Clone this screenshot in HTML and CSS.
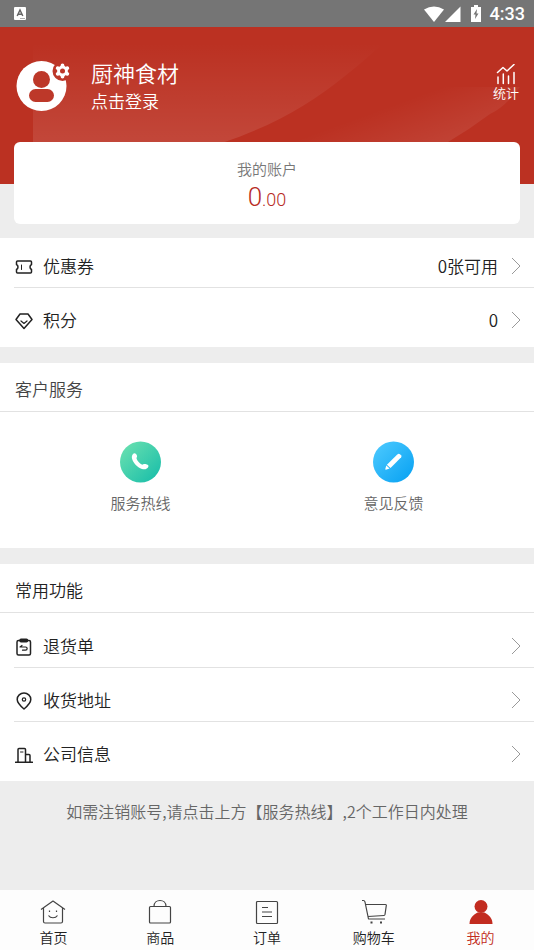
FILE: index.html
```html
<!DOCTYPE html>
<html lang="zh-CN">
<head>
<meta charset="utf-8">
<meta name="viewport" content="width=device-width, initial-scale=1">
<title>我的</title>
<link rel="stylesheet" href="styles.css">
</head>
<body>
<div class="status">
  <svg class="status-app" width="12" height="13" viewBox="0 0 12 13"><rect width="12" height="13" rx="1" fill="#fff"/><path d="M3.2 9 6 3l2.8 6M4.3 7.2h3.4" fill="none" stroke="#666" stroke-width="1.5"/><path d="M6 11.5h5" stroke="#999" stroke-width=".8"/></svg>
  <svg width="20" height="16" viewBox="0 0 20 16" fill="#fff"><path d="M0 3.5Q10-2.500 20 3.500L10 16z"/></svg>
  <svg class="signal" width="16" height="16" viewBox="0 0 16 16" fill="#fff"><path d="M15.500.500v15.500H0z"/></svg>
  <svg class="battery" width="12" height="17" viewBox="0 0 12 17"><path d="M4 0h4v2h3v15H1V2h3z" fill="#fff"/><path d="M7 4 3.500 9.500h2L5 14l3.500-5.500h-2z" fill="#757575"/></svg>
  <span class="clock">4:33</span>
</div>
<main class="page">
  <header class="hero">
    <svg class="hero-art" viewBox="0 0 534 157" preserveAspectRatio="none" aria-hidden="true">
      <defs>
        <linearGradient id="sheen" x1="0" y1="0" x2="0" y2="1"><stop offset=".1" stop-color="#fff" stop-opacity="0"/><stop offset=".75" stop-color="#fff" stop-opacity=".11"/></linearGradient>
        <linearGradient id="sheen2" gradientUnits="userSpaceOnUse" x1="400" y1="75" x2="420" y2="130"><stop offset="0" stop-color="#fff" stop-opacity="0"/><stop offset="1" stop-color="#fff" stop-opacity=".09"/></linearGradient>
      </defs>
      <path d="M33 0H400Q372 28 345 49C312 76 275 98 222 116L140 157H33z" fill="url(#sheen)"/>
      <path d="M222 116Q275 98 312 74L380 60H520Q505 80 490 87Q470 102 448 115L390 157H200z" fill="url(#sheen2)"/>
    </svg>
    <a class="profile" href="#login">
      <svg width="56" height="52" viewBox="0 0 56 52" aria-hidden="true">
        <defs><mask id="cut"><rect width="56" height="52" fill="#fff"/><circle cx="46.500" cy="11" r="10" fill="#000"/></mask></defs>
        <circle cx="25.500" cy="26" r="25" fill="#fff" mask="url(#cut)"/>
        <circle cx="25.500" cy="19.500" r="8.500" fill="#bd3829"/>
        <rect x="13" y="29" width="25" height="13" rx="6.500" fill="#bd3829"/>
        <circle cx="46.500" cy="11" r="5.400" fill="#fff"/>
        <path d="M46.500 5.500v11M41.700 8.200l9.600 5.600M51.300 8.200l-9.600 5.600" stroke="#fff" stroke-width="3.800" stroke-linecap="round"/>
        <circle cx="46.500" cy="11" r="2.500" fill="#bd3829"/>
      </svg>
      <span class="who"><span class="name">厨神食材</span><span class="login">点击登录</span></span>
    </a>
    <a class="stats" href="#stats">
      <svg width="20" height="21" viewBox="0 0 20 21" fill="none" stroke="#fff" stroke-width="1.500" stroke-linecap="round" stroke-linejoin="round"><path d="M1.500 8.500 7 3.500l4 3.500 7-6.500M2 13v6.500M7.300 10v9.500M12.500 12v7.500M18 8.500v11"/></svg>
      <span>统计</span>
    </a>
  </header>
  <section class="account">
    <span class="account-label">我的账户</span>
    <span class="balance">0<small>.00</small></span>
  </section>

  <nav class="panel list">
    <a class="row" href="#coupons">
      <svg class="icon" viewBox="0 0 18 18"><path d="M2.500 3h13q1 0 1 1v2.500c-2 1-2 4 0 5V14q0 1-1 1h-13q-1 0-1-1v-2.500c2-1 2-4 0-5V4q0-1 1-1z"/><path d="M6.500 7v4.500" stroke-width="1"/></svg>
      <span class="label">优惠券</span><span class="value">0张可用</span>
      <svg class="chevron" viewBox="0 0 10 18"><path d="m1 1 8 8-8 8"/></svg>
    </a>
    <a class="row" href="#points">
      <svg class="icon" viewBox="0 0 18 18"><path d="M5 2h8l4 5.500L9 16.500 1 7.500z"/><path d="m6 9 3 2.500L12 9" stroke-width="1.200"/></svg>
      <span class="label">积分</span><span class="value">0</span>
      <svg class="chevron" viewBox="0 0 10 18"><path d="m1 1 8 8-8 8"/></svg>
    </a>
  </nav>

  <section class="panel">
    <h2 class="title muted">客户服务</h2>
    <div class="services">
      <a class="service" href="#hotline">
        <svg width="42" height="42" viewBox="0 0 42 42"><defs><linearGradient id="green" x1="0" y1="0" x2="1" y2="1"><stop stop-color="#6fe3b0"/><stop offset="1" stop-color="#14bba9"/></linearGradient></defs><circle cx="20.500" cy="21" r="20.500" fill="url(#green)"/><path d="M13 13c1.500-1.500 3.500-.3 4 1.800.3 1.300-.8 2-.4 3 .8 2.300 3 4.500 5.200 5.800 1 .5 1.700-.8 3-.6 1.900.1 4.200.8 3.600 2.500-.7 2.300-3.600 3.500-6.400 2.500-5-1.700-8.800-6-10-10.500-.4-1.700 0-3.500 1-4.500z" fill="#fff"/></svg>
        <span>服务热线</span>
      </a>
      <a class="service" href="#feedback">
        <svg width="42" height="42" viewBox="0 0 42 42"><defs><linearGradient id="blue" x1="0" y1="0" x2="1" y2="1"><stop stop-color="#4fcbff"/><stop offset="1" stop-color="#05a0f2"/></linearGradient></defs><circle cx="20.500" cy="21" r="20.500" fill="url(#blue)"/><path d="m24 13.800 1-.9q1-.6 2 .3l1 1q.9 1 .2 2L17.500 27l-3.600-3.200z" fill="#fff"/><path d="m13.300 24.600 3.300 3-3.700 1.100q-.8 0-.6-.8z" fill="#fff"/></svg>
        <span>意见反馈</span>
      </a>
    </div>
  </section>

  <section class="panel">
    <h2 class="title">常用功能</h2>
    <nav class="list tall">
      <a class="row" href="#returns">
        <svg class="icon" viewBox="0 0 18 18"><rect x="2" y="2.500" width="13.500" height="14.500" rx="1.500"/><path d="M6 1.300h5.500q1 0 1 1.200t-1 1.200H6q-1 0-1-1.200t1-1.200z"/><path d="M7 7.500 5 9h5.500c2.200 0 2.200 3.200 0 3.200H7.500" stroke-width="1.200"/></svg>
        <span class="label">退货单</span>
        <svg class="chevron" viewBox="0 0 10 18"><path d="m1 1 8 8-8 8"/></svg>
      </a>
      <a class="row" href="#address">
        <svg class="icon" viewBox="0 0 18 18"><path d="M9 17C5.500 14 2.200 11 2.200 7.500a6.800 6.500 0 0 1 13.600 0C15.800 11 12.500 14 9 17z"/><circle cx="9" cy="7.500" r="1.700" stroke-width="1.200"/></svg>
        <span class="label">收货地址</span>
        <svg class="chevron" viewBox="0 0 10 18"><path d="m1 1 8 8-8 8"/></svg>
      </a>
      <a class="row" href="#company">
        <svg class="icon" viewBox="0 0 18 18"><path d="M.5 16.300h17M3 16V3.500q0-1 1-1h5.500q1 0 1 1V16M10.500 8.500H14q1 0 1 1V16"/><path d="M5.500 6H8" stroke-width="1"/></svg>
        <span class="label">公司信息</span>
        <svg class="chevron" viewBox="0 0 10 18"><path d="m1 1 8 8-8 8"/></svg>
      </a>
    </nav>
  </section>
  <p class="note">如需注销账号,请点击上方【服务热线】,2个工作日内处理</p>
</main>

<nav class="tabs">
  <a class="tab" href="#home"><svg viewBox="0 0 26 26"><path d="m1 10.500 12-8.500 12 8.500M3.500 9v13.500q0 1.500 1.500 1.500h16q1.500 0 1.500-1.500V9"/><path d="M8.500 16.500c2 3 7 3 9 0"/><path d="M9.500 11.500v1.500M16.500 11.500v1.500"/></svg><span>首页</span></a>
  <a class="tab" href="#goods"><svg viewBox="0 0 26 26"><rect x="2.500" y="7.500" width="21" height="16.500" rx="1"/><path d="M7 7.500c0-8 12-8 12 0"/></svg><span>商品</span></a>
  <a class="tab" href="#orders"><svg viewBox="0 0 26 26"><rect x="2.500" y="2.500" width="21" height="22" rx="1"/><path d="M8 8.500h6M8 13h10M8 17.500h10"/></svg><span>订单</span></a>
  <a class="tab" href="#cart"><svg viewBox="0 0 26 26"><path d="M1 1.500h1.500q1 0 1.500 1.500L7.500 20H24M4.500 5.500h20q1 0 .8 1L24 15.500q-.2 1-1 1L7 17.500"/><path d="M9.500 23.500h2M19 23.500h2" stroke-width="2"/></svg><span>购物车</span></a>
  <a class="tab active" href="#me"><svg viewBox="0 0 26 26"><circle cx="13" cy="7.500" r="6.500"/><path d="M1.500 25c0-6 3.500-9 8-11.500h7c4.500 2.500 8 5.500 8 11.500z"/></svg><span>我的</span></a>
</nav>
</body>
</html>
```
FILE: styles.css
```css
* { box-sizing: border-box; }

body {
  margin: 0;
  min-height: 100vh;
  display: flex;
  flex-direction: column;
  background: #ededed;
  color: #222;
  font-family: "Noto Sans CJK SC", sans-serif;
  font-size: 17px;
  font-weight: 350;
  line-height: 24px;
}

a { color: inherit; text-decoration: none; }
svg { display: block; flex: none; }

.status {
  display: flex;
  align-items: center;
  height: 27px;
  padding: 0 9px 0 14px;
  background: #757575;
  color: #fff;
}
.status-app { margin-right: auto; }
.signal { margin-left: 1px; }
.battery { margin: 0 8px 0 9px; }
.clock { font-family: Roboto, sans-serif; font-size: 18px; font-weight: 500; }

.page { flex: 1; }

.hero {
  position: relative;
  display: flex;
  justify-content: space-between;
  align-items: flex-start;
  height: 157px;
  padding: 33px 15px 0 16px;
  background: #bb3122;
  color: #fff;
}
.hero-art { position: absolute; inset: 0; width: 100%; height: 100%; }
.profile { position: relative; display: flex; gap: 19px; }
.who { display: flex; flex-direction: column; gap: 5px; }
.name { font-size: 22px; }
.stats {
  position: relative;
  display: flex;
  flex-direction: column;
  align-items: center;
  padding-top: 4px;
  font-size: 13px;
  line-height: 16px;
}

.account {
  position: relative;
  display: flex;
  flex-direction: column;
  align-items: center;
  margin: -42px 14px 14px;
  padding: 15px 0 11px;
  border-radius: 6px;
  background: #fff;
}
.account-label { color: #777; font-size: 15px; }
.balance { color: #b82c25; font-family: Roboto, sans-serif; font-size: 26px; line-height: 32px; }
.balance small { font-size: 18px; line-height: 18px; }

.panel { margin-bottom: 16px; background: #fff; }
.list { display: flex; flex-direction: column; gap: 10px; padding: 6px 0 5px 14px; }
.tall { padding-top: 11px; }
.row {
  display: flex;
  align-items: center;
  height: 44px;
  padding-right: 13px;
  border-bottom: 1px solid #e2e2e2;
}
.row:last-child { border-bottom-color: transparent; }
.icon {
  width: 18px;
  height: 18px;
  margin: 3px 10px 0 1px;
  fill: none;
  stroke: #222;
  stroke-width: 1.5;
  stroke-linecap: round;
  stroke-linejoin: round;
}
.label { flex: 1; }
.chevron { width: 10px; height: 18px; margin-left: 13px; fill: none; stroke: #999; stroke-width: 1; }

.title {
  margin: 0;
  padding: 14px 15px 10px;
  border-bottom: 1px solid #e2e2e2;
  font-size: 17px;
  font-weight: 350;
}
.muted { color: #444; }

.services { display: grid; grid-template-columns: 1fr 1fr; padding: 29px 14px 33px; }
.service {
  display: flex;
  flex-direction: column;
  align-items: center;
  gap: 8px;
  color: #666;
  font-size: 15px;
}

.note { margin: 18px 0; color: #666; font-size: 16px; text-align: center; }

.tabs { display: flex; height: 60px; padding-top: 9px; background: #fdfdfd; }
.tab {
  flex: 1;
  display: flex;
  flex-direction: column;
  align-items: center;
  font-size: 14px;
}
.tab svg { width: 26px; height: 26px; fill: none; stroke: #444; stroke-width: 1.2; stroke-linejoin: round; }
.active { color: #c22c20; }
.active svg { fill: #c22c20; stroke: none; }
```
